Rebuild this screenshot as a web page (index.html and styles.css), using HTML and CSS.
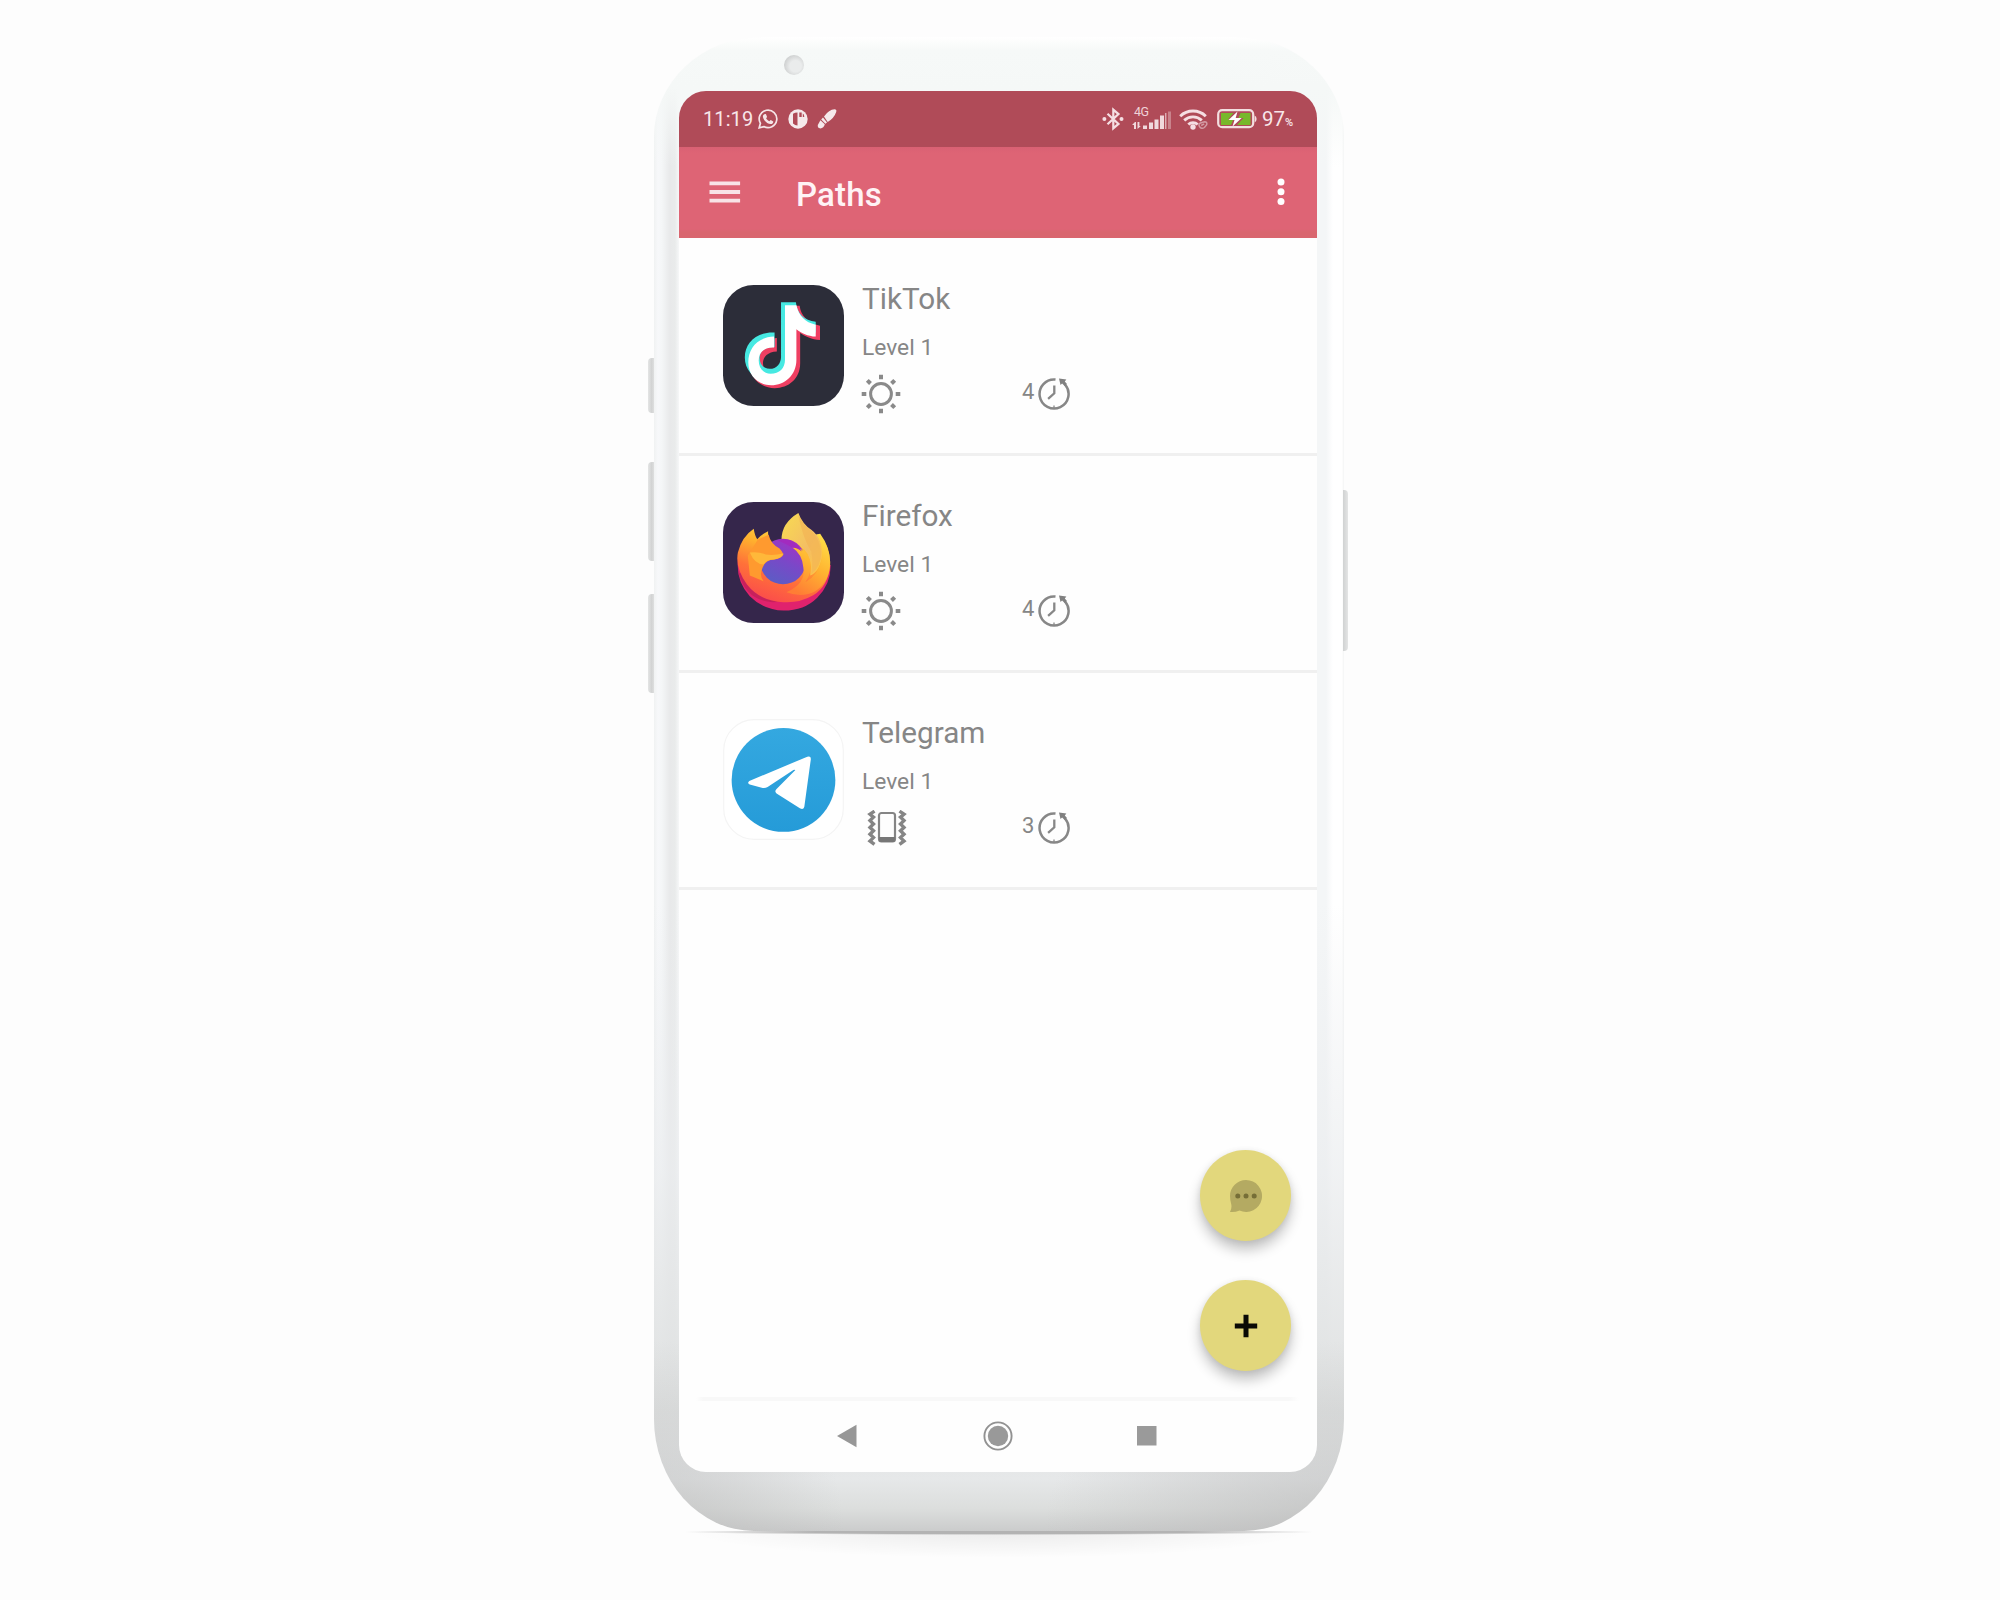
FILE: index.html
```html
<!DOCTYPE html>
<html lang="en">
<head>
<meta charset="utf-8">
<title>Paths</title>
<link rel="stylesheet" href="styles.css">
</head>
<body>
<svg width="0" height="0" class="defs" aria-hidden="true">
  <defs>
    <symbol id="sun" viewBox="0 0 40 40">
      <g fill="none" stroke="#8a8a8a">
        <circle cx="20" cy="20" r="10.400" stroke-width="3"/>
        <path stroke-width="4" d="M20 .7v4.600M20 34.700v4.600M.7 20h4.600M34.700 20h4.600M6.300 6.300l3.200 3.200M30.500 30.500l3.200 3.200M6.300 33.700l3.200-3.200M30.500 9.500l3.200-3.200"/>
      </g>
    </symbol>
    <symbol id="clock" viewBox="0 0 34 34">
      <g fill="none" stroke="#878787" stroke-width="2.500">
        <path d="M18.500 2.600A14.500 14.500 0 1 0 28 7.500"/>
        <path d="M17.300 8.500v7.800l-6.200 5.600" stroke-width="2.300"/>
        <path d="M17 28.500v3" stroke-width="1.300"/>
      </g>
      <path fill="#808080" d="M22 1.400l7.400 1.100-1.600 2 2.200 2.500-2.400 2.100-2.500-2.600-1.600 1.600z"/>
    </symbol>
    <symbol id="vibrate" viewBox="0 0 40 36">
      <g fill="none" stroke="#858585">
        <rect x="12" y="3" width="16" height="28.500" rx="2.500" stroke-width="2.200"/>
        <path stroke-width="3.400" d="M7.500 1.200L3 4.200l3.500 3L3 10.600l3.500 3.400L3 17.400l3.500 3.400L3 24.200l3.500 3.400L3 31l4.500 3.400M32.500 1.200l4.500 3-3.500 3 3.500 3.400-3.500 3.400 3.500 3.400-3.500 3.400 3.500 3.400-3.500 3.400L37 31l-4.500 3.400"/>
      </g>
      <path fill="#777" d="M12 27h16v3q0 2-2 2H14q-2 0-2-2z"/>
    </symbol>
    <linearGradient id="fox" x1=".75" y1="0" x2=".3" y2="1">
      <stop offset="0" stop-color="#ffe24a"/><stop offset=".35" stop-color="#ffb02e"/><stop offset=".65" stop-color="#ff7139"/><stop offset="1" stop-color="#fb4a4c"/>
    </linearGradient>
    <linearGradient id="ring" x1=".8" y1="0" x2=".35" y2="1">
      <stop offset="0" stop-color="#ffe047"/><stop offset=".5" stop-color="#ffb431"/><stop offset="1" stop-color="#ff7d35"/>
    </linearGradient>
    <linearGradient id="flame" x1="0" y1="0" x2="1" y2="1">
      <stop offset="0" stop-color="#f8dc51"/><stop offset=".6" stop-color="#f4bd64"/><stop offset="1" stop-color="#ffc83c"/>
    </linearGradient>
    <linearGradient id="globe" x1=".8" y1="0" x2=".3" y2="1">
      <stop offset="0" stop-color="#a92fc4"/><stop offset=".5" stop-color="#7a48c8"/><stop offset="1" stop-color="#5b5dc4"/>
    </linearGradient>
    <linearGradient id="tele" x1="0" y1="0" x2="0" y2="1">
      <stop offset="0" stop-color="#34a8e0"/><stop offset="1" stop-color="#259bd8"/>
    </linearGradient>
  </defs>
</svg>

<main class="phone">
  <i class="key key-a"></i><i class="key key-b"></i><i class="key key-c"></i><i class="key key-power"></i>
  <i class="camera"></i>
  <div class="screen">
    <header class="status">
      <span class="time">11:19</span>
      <svg class="whatsapp" width="20" height="20" viewBox="0 0 20 20"><path fill="none" stroke="#f5e4e7" stroke-width="1.700" d="M1.200 18.800l1.200-4.500a8.800 8.800 0 1 1 3.400 3.300z"/><path fill="#f5e4e7" d="M6.200 5.200l1.700-.1 1.200 2.900-1 1.300c.8 1.500 2 2.400 3.300 3l1.300-1.300 2.600 1.400c0 1.900-1.400 2.700-2.800 2.600-4-.6-7.300-4.200-7.600-7.600 0-.9.500-1.800 1.300-2.200z"/></svg>
      <svg class="pocket" width="20" height="20" viewBox="0 0 20 20"><circle cx="10" cy="10" r="9.700" fill="#f5e9eb"/><path d="M5 4.800q2-1.300 4.500-1.300v13q-2.500-.2-4.500-2zM11.300 3.500h2.400v4.400h-2.400zM14.800 4.600q1.500 1 1.500 3.300h-1.500z" fill="#b04a57"/></svg>
      <svg class="brush" width="20" height="20" viewBox="0 0 20 20"><path fill="#f5e9eb" d="M7 7.500Q12 .5 17.500.300q2.500.2 1.700 2.700-2 6-8.500 10.100zM6 8.600l4 4.800-1.600 1.300-4.200-4.200zM3.400 11.300l4.400 4q-1 3.800-4.400 4.200Q.3 19 .8 16z"/></svg>
      <span class="grow"></span>
      <svg class="bt" width="22" height="24" viewBox="0 0 22 24"><path fill="none" stroke="#f5dfe3" stroke-width="2.200" d="M5.500 6.700l11 10.200-5.200 4.500V2.600l5.200 4.500-11 10.200"/><circle cx="2.400" cy="12" r="2" fill="#f5dfe3"/><circle cx="19.500" cy="12" r="2" fill="#f5dfe3"/></svg>
      <span class="cell">
        <span class="net">4G</span>
        <svg width="40" height="20" viewBox="0 0 40 20"><g fill="#f0d8dc"><path d="M3 12L0 15h2v4h2v-7zM5.500 12v7l3.300-3H7.400v-4zM11 15.500h4V19h-4zM17 12.500h4V19h-4zM22.500 9.500h4V19h-4zM28 5.500h4V19h-4zM33.300 3h1V19h-1z"/><path opacity=".4" d="M36 1.500h3V19h-3z"/></g></svg>
      </span>
      <svg class="wifi" width="30" height="22" viewBox="0 0 30 22"><g fill="none" stroke="#f5dfe3" stroke-width="2.900"><path d="M1.200 8.200a18.500 18.500 0 0 1 25.600 0M5.200 12.400a12.800 12.800 0 0 1 17.600 0M9.300 16.500a7 7 0 0 1 9.400 0"/><path stroke="#d39aa3" stroke-width="1.500" d="M20.500 18.500q-1.500-2.500 1-3.500l4-1.300q3 .2 2.200 3l-2.300 2.800q-3 2-4.900-1zm1.700-1l3-1.600"/></g><circle cx="14" cy="19" r="2.700" fill="#f5dfe3"/></svg>
      <svg class="battery" width="40" height="20" viewBox="0 0 40 20"><rect x="1.200" y="1.200" width="35" height="17" rx="4" fill="none" stroke="#f3dfe0" stroke-width="2.200"/><path fill="#78b82b" d="M4 4h12.500L11 10.500h5.300L14 16H4zM23.500 4h10v12H20l6.500-7h-5z"/><path fill="#fff" d="M20.500 2.600l-9 8.400h6l-2 6.600 9.200-8.700h-6z"/><path fill="#f3dfe0" d="M37.600 6.500q2 .8 2 3.500t-2 3.500z"/></svg>
      <span class="pct">97<small>%</small></span>
    </header>
    <nav class="appbar">
      <svg width="32" height="24" viewBox="0 0 32 24"><path stroke="#f8e3e7" stroke-width="3.800" d="M.5 3.300h30.600M.5 12h30.600M.5 20.700h30.600"/></svg>
      <h1>Paths</h1>
      <svg width="8" height="28" viewBox="0 0 8 28"><g fill="#fff"><circle cx="4" cy="4" r="3.500"/><circle cx="4" cy="13.800" r="3.500"/><circle cx="4" cy="23.600" r="3.500"/></g></svg>
    </nav>
    <ul class="list">
      <li class="row">
        <svg class="app" viewBox="0 0 122 122"><rect width="122" height="122" rx="31" fill="#2c2d39"/>
          <path fill="#ef3f62" d="M65.300 21h12c1 9.500 8 17.500 20.500 20v14.500c-8.500-.5-15-3.500-20-7v30.500c0 16-12 25-25.500 25-14.500 0-25-10-25-23.500 0-14 10-25.500 27-27v13.500c-9 .5-14 5-14 12 0 6.500 5 11 11.500 11 8 0 13.500-6 13.500-13z"/>
          <path fill="#46e9e2" d="M58.500 17.500h15c1 11 8.500 18.500 20 19.500v11c-8-.5-15-3-20-7v29c0 16-10 27-25.500 27-15 0-26-10-26-24s11-26 30-25v14.500c-9.500 0-15 4-15 11 0 6.500 4 11 10 11 7.500 0 11.500-6 11.500-12z"/>
          <path fill="#fff" d="M62.500 20.500h11.500c2.500 10.500 8.500 17.500 19.500 19.500v12c-8-.5-14.500-3.500-19.500-7.500v31c0 15-11.500 25.500-25.500 25.500-13.500 0-23-9.500-23-23 0-14.500 9.500-25.500 26-26v11c-9.500-.5-15.500 4.500-15.500 13 0 8 5 13.500 12 13.500 9 0 14.500-6 14.500-14z"/>
        </svg>
        <div class="info">
          <h2>TikTok</h2><p>Level 1</p>
          <div class="meta"><svg class="sun"><use href="#sun"/></svg><span class="count">4</span><svg class="clock"><use href="#clock"/></svg></div>
        </div>
      </li>
      <li class="row">
        <svg class="app" viewBox="0 0 122 122"><rect width="122" height="122" rx="31" fill="#35264b"/>
          <path fill="#e0226d" d="M15 58q-2 22 12 37 14 14 34 14.500 21 0 34-13 14-14 13.500-33z"/>
          <path fill="#c7215c" d="M16 72q7 27 34 29 10 0 16-3L25 70z"/>
          <path fill="url(#fox)" d="M31 27q1 7 3.500 10.500Q38 33 45.500 29.500q-.5 6 2.500 12L98 32q11 15 10 32-2 21-17 30-14 8-30 7-24-1-37-18-12-17-9-32 4-16 16-24z"/>
          <path fill="url(#flame)" d="M76 11q4 11 13 17 12 9 11 27-3 16-12 19 2-18-6-26-9-10-23-10 0-17 17-27z"/>
          <circle cx="60.500" cy="60" r="23" fill="url(#globe)"/>
          <path fill="#ff9a2f" d="M35 38l11-5q2 9 11 14 3 3 4 6-2 4-9 5-9 0-12 8-4 8 1 14l-14-6-2-20z"/>
          <path fill="#ffb83a" d="M27 51q10-1 16 2 9 1 18-1-2 5-10 6-7 0-10 5-9 0-14-12z"/>
          <path fill="url(#ring)" d="M70 46q14 0 18 14 2 11-5 21 13-7 17-24 1-14-5-25 12 10 13 28 0 20-15 30-13 7-29 1 20-9 17-25-1-13-11-20z"/>
          <path fill="#f3b555" d="M76 13q5 10 13 16 9 9 10 22 0 14-10 22 2-13 0-23-9-15-13-37z" opacity=".75"/>
          <path fill="#a22bbf" d="M55 38.500q17-4 24.500 11.500-5-4-10-4-4-3-14.500-7.500z"/>
        </svg>
        <div class="info">
          <h2>Firefox</h2><p>Level 1</p>
          <div class="meta"><svg class="sun"><use href="#sun"/></svg><span class="count">4</span><svg class="clock"><use href="#clock"/></svg></div>
        </div>
      </li>
      <li class="row">
        <svg class="app" viewBox="0 0 122 122"><rect x=".7" y=".7" width="120.600" height="120.600" rx="31" fill="#fff" stroke="#f4f4f4" stroke-width="1.200"/><circle cx="61" cy="61.500" r="52.300" fill="url(#tele)"/><path fill="#fff" d="M26.500 62.500L85 38q4-1.300 3.500 3L82 88.500q-1 3.500-4.500 1.500L54 75q-2.500-2 0-4.500l19-19.200q-1-.5-2 0L45 68.500q-2.500 1.500-5 1l-13-3.500q-3-1.500-.5-3.500z"/></svg>
        <div class="info">
          <h2>Telegram</h2><p>Level 1</p>
          <div class="meta"><svg class="vibrate"><use href="#vibrate"/></svg><span class="count">3</span><svg class="clock"><use href="#clock"/></svg></div>
        </div>
      </li>
    </ul>
    <footer class="navbar">
      <svg width="20" height="24" viewBox="0 0 20 24"><path fill="#979797" d="M0 12L19.500.8v22.400z"/></svg>
      <svg width="30" height="30" viewBox="0 0 30 30"><circle cx="15" cy="15" r="13.600" fill="none" stroke="#929292" stroke-width="1.900"/><circle cx="15" cy="15" r="10.200" fill="#999"/></svg>
      <svg width="20" height="20" viewBox="0 0 20 20"><rect width="19.500" height="19.500" fill="#9a9a9a"/></svg>
    </footer>
    <div class="fabs">
      <span class="fab"><svg width="34" height="34" viewBox="0 0 34 34"><path fill="#b4aa62" d="M17 1a16 16 0 1 1-6.500 30.600Q6 33.500 1 33q2-3.500 1.300-7.500Q1 21 1 17A16 16 0 0 1 17 1z"/><g fill="#766e37"><circle cx="8.800" cy="17" r="2.500"/><circle cx="17" cy="17" r="2.500"/><circle cx="25.200" cy="17" r="2.500"/></g></svg></span>
      <span class="fab"><svg width="24" height="24" viewBox="0 0 24 24"><path stroke="#0a0a05" stroke-width="5" d="M12 .8v22.400M.8 12h22.400"/></svg></span>
    </div>
  </div>
</main>
<div class="ground"></div>
</body>
</html>
```
FILE: styles.css
```css
* { box-sizing: border-box; }
body { margin: 0; height: 1600px; overflow: hidden; background: #fdfdfd; font-family: Roboto, sans-serif; }
.defs { display: block; }
h1, h2, p, ul { margin: 0; padding: 0; }
ul { list-style: none; }
svg { display: block; flex: none; }

.phone {
  position: relative;
  width: 690px;
  height: 1494px;
  margin: 37px 0 0 654px;
  padding: 54px 27px 59px 25px;
  border-radius: 108px 108px 100px 100px / 100px 100px 112px 112px;
  background:
    radial-gradient(ellipse 190px 190px at 0 100%, rgba(185,185,185,.6), rgba(190,190,190,0)),
    radial-gradient(ellipse 300px 190px at 100% 100%, rgba(185,185,185,.65), rgba(190,190,190,0)),
    linear-gradient(rgba(228,230,231,0) 58%, rgba(234,236,238,.7) 76%, #dfe1e1 92%, #e6e8e9 96.500%, #dcdedd 98.500%, #cbcccc 100%),
    linear-gradient(#fff, #f6f9f8 14px, #f5f8f7 50px, rgba(246,249,248,0) 130px),
    linear-gradient(90deg, #f0f2f2 0, #f7f8fa 4px, #f4f6f7 8px, #e8e9ea 16px, #e9ebeb 21px, #f6f7f8 25px, #f4f6f7 662px, #f4f6f7 672px, #fff 679px, #fff 688px, #f3f4f4 690px);
}
.camera {
  position: absolute; left: 130px; top: 18px; width: 20px; height: 20px; border-radius: 50%;
  background: radial-gradient(circle at 58% 56%, #eaecec 35%, #d0d2d2 70%);
}
.key { position: absolute; left: -6px; width: 6px; border-radius: 4px 0 0 4px; background: linear-gradient(90deg, #e4e5e5, #d2d3d3 60%, #dedfdf); }
.key-a { top: 321px; height: 55px; }
.key-b { top: 425px; height: 99px; }
.key-c { top: 557px; height: 99px; }
.key-power { left: 689px; top: 453px; height: 161px; width: 5px; border-radius: 0 4px 4px 0; background: linear-gradient(90deg, #d0d2d2, #e4e5e5); }

.screen {
  position: relative;
  display: flex;
  flex-direction: column;
  height: 1381px;
  border-radius: 27px;
  overflow: hidden;
  background: #fefefe;
}
.status { display: flex; align-items: center; height: 56px; padding: 0 20px 0 24px; background: #b04b58; color: #f8e6e9; }
.time { width: 55px; font-size: 20px; letter-spacing: .1px; }
.pocket { margin-left: 10px; }
.brush { margin-left: 9px; }
.grow { flex: 1; }
.cell { position: relative; margin-left: 8px; padding-top: 2px; }
.net { position: absolute; left: 2px; top: -1px; font-size: 12.500px; line-height: 10px; color: #efd2d7; letter-spacing: -.5px; }
.wifi { margin-left: 7px; }
.battery { margin-left: 8px; }
.pct { width: 35px; margin-left: 5px; font-size: 20.500px; white-space: nowrap; }
.pct small { font-size: 11px; font-weight: 500; }

.appbar {
  display: flex; align-items: center; height: 91px; padding: 0 32px 1px 30px;
  background: linear-gradient(#d96173, #de6475 6px, #de6475 82px, #d9666f 85px, #d9666f);
}
.appbar h1 { flex: 1; margin-left: 55px; padding-top: 5px; color: #fff3f5; font-size: 33px; font-weight: 500; line-height: 40px; letter-spacing: .2px; }

.list { padding-top: 1px; }
.row { display: flex; height: 217px; padding: 46px 44px 0; border-bottom: 3px solid #f0f0f0; }
.app { width: 121px; height: 121px; }
.info { flex: 1; margin-left: 18px; color: #868686; }
.info h2 { font-size: 29.700px; font-weight: 400; line-height: 36px; margin-top: -4px; }
.info p { font-size: 22.800px; line-height: 28px; margin-top: 17px; }
.meta { display: flex; align-items: center; height: 40px; margin-top: 12px; }
.sun { width: 40px; height: 40px; margin-left: -1px; }
.vibrate { width: 40px; height: 36px; margin-left: 5px; margin-right: -6px; }
.count { width: 13px; margin-left: 121px; font-size: 22px; line-height: 24px; margin-top: -4px; }
.clock { width: 34px; height: 34px; margin-left: 2px; }

.navbar {
  display: flex; align-items: center; height: 75px; margin-top: auto; padding: 2px 160px 0 158px;
  justify-content: space-between;
  background: linear-gradient(90deg, transparent 17px, #f8f8f8 24px, #f8f8f8 610px, transparent 620px) top / 100% 4px no-repeat;
}
.navbar svg:nth-child(2) { margin-left: 1px; }
.fabs { position: absolute; right: 26px; top: 1059px; display: grid; gap: 39px; }
.fab {
  display: grid; place-items: center; width: 91px; height: 91px; border-radius: 50%;
  background: #e2d77c; box-shadow: 0 9px 13px rgba(0,0,0,.23), 0 1px 6px rgba(0,0,0,.08);
}
.ground {
  width: 640px; height: 32px; margin-left: 679px;
  background:
    radial-gradient(ellipse 318px 3px at 50% 1px, #b3b3b3 60%, rgba(190,190,190,0)),
    radial-gradient(ellipse 310px 27px at 50% 0, rgba(0,0,0,.07), rgba(0,0,0,0));
}
```
